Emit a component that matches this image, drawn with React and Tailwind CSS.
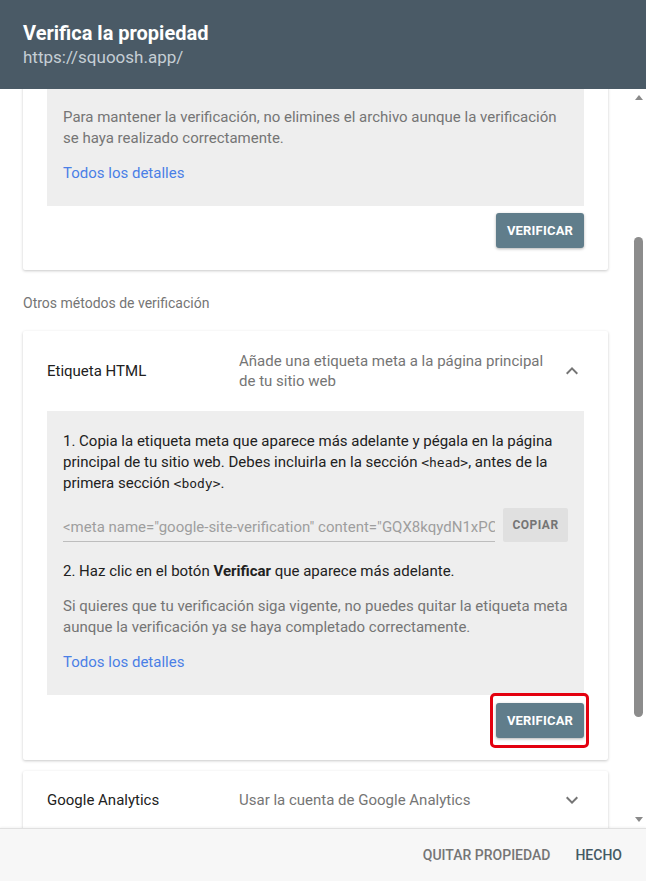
import React from "react";

const ChevronUp = () => (
  <svg width="24" height="24" viewBox="0 0 24 24" fill="#757575">
    <path d="M7.41 15.41L12 10.83l4.59 4.58L18 14l-6-6-6 6z" />
  </svg>
);
const ChevronDown = () => (
  <svg width="24" height="24" viewBox="0 0 24 24" fill="#757575">
    <path d="M7.41 8.59L12 13.17l4.59-4.58L18 10l-6 6-6-6 1.41-1.41z" />
  </svg>
);

const VerifyButton = () => (
  <button className="h-[35px] w-[88px] rounded-[3px] bg-[#607d8b] text-white text-[13px] font-bold tracking-[0.2px] shadow-[0_1px_3px_rgba(0,0,0,0.3)]">
    VERIFICAR
  </button>
);

const mono = { fontFamily: "'DejaVu Sans Mono', monospace" };

export default function App() {
  return (
    <div
      className="w-full h-[881px] flex flex-col overflow-hidden bg-white"
      style={{ fontFamily: "Roboto, 'Liberation Sans', sans-serif" }}
    >
      {/* Header */}
      <div className="h-[89px] shrink-0 bg-[#4a5a66] px-[23px] pt-[20px]">
        <div className="text-[20px] leading-[26px] font-bold text-white">Verifica la propiedad</div>
        <div className="text-[17px] leading-[22px] text-[#c5ced5]">https://squoosh.app/</div>
      </div>

      {/* Scroll area */}
      <div className="flex-1 flex flex-row overflow-hidden">
        <div className="flex-1 overflow-hidden">
          <div className="mt-[-2px] px-[23px]">
            {/* Card 1 */}
            <div className="bg-white rounded-b-[2px] shadow-[0_1px_3px_rgba(0,0,0,0.22)] px-[24px] pb-[22px]">
              <div className="bg-[#eeeeee] px-[16px] pt-[20px] pb-[22px]">
                <p className="text-[15px] leading-[21px] text-[#757575]">
                  Para mantener la verificación, no elimines el archivo aunque la verificación se haya realizado correctamente.
                </p>
                <div className="mt-[14px] text-[15px] leading-[21px] text-[#4a7fe6]">Todos los detalles</div>
              </div>
              <div className="mt-[7px] flex justify-end">
                <VerifyButton />
              </div>
            </div>

            <div className="mt-[23px] mb-[18px] text-[14px] leading-[20px] text-[#757575]">
              Otros métodos de verificación
            </div>

            {/* Card 2 */}
            <div className="bg-white rounded-[2px] shadow-[0_1px_3px_rgba(0,0,0,0.22)] px-[24px] pb-[22px]">
              <div className="flex items-center py-[20px]">
                <div className="w-[192px] text-[15px] leading-[21px] text-[#212121]">Etiqueta HTML</div>
                <div className="flex-1 pr-[10px] text-[15px] leading-[20px] text-[#757575]">
                  Añade una etiqueta meta a la página principal de tu sitio web
                </div>
                <ChevronUp />
              </div>
              <div className="bg-[#eeeeee] px-[16px] pt-[20px] pb-[22px]">
                <p className="text-[15px] leading-[21px] text-[#212121]">
                  1. Copia la etiqueta meta que aparece más adelante y pégala en la página principal de tu sitio web. Debes incluirla en la sección{" "}
                  <span className="text-[13px] leading-[21px]" style={mono}>&lt;head&gt;</span>, antes de la primera sección{" "}
                  <span className="text-[13px] leading-[21px]" style={mono}>&lt;body&gt;</span>.
                </p>
                <div className="mt-[14px] flex items-end gap-[8px]">
                  <div className="flex-1 min-w-0 h-[28px] border-b border-[#bdbdbd] overflow-hidden whitespace-nowrap text-[15px] leading-[27px] text-[#9e9e9e]">
                    &lt;meta name="google-site-verification" content="GQX8kqydN1xPC" /&gt;
                  </div>
                  <button className="w-[65px] h-[34px] shrink-0 rounded-[2px] bg-[#e0e0e0] text-[12px] font-bold text-[#757575] tracking-[0.5px]">
                    COPIAR
                  </button>
                </div>
                <p className="mt-[19px] text-[15px] leading-[21px] text-[#212121]">
                  2. Haz clic en el botón <b>Verificar</b> que aparece más adelante.
                </p>
                <p className="mt-[14px] text-[15px] leading-[21px] text-[#757575]">
                  Si quieres que tu verificación siga vigente, no puedes quitar la etiqueta meta aunque la verificación ya se haya completado correctamente.
                </p>
                <div className="mt-[14px] text-[15px] leading-[21px] text-[#4a7fe6]">Todos los detalles</div>
              </div>
              <div className="mt-[8px] flex justify-end">
                <div className="relative">
                  <VerifyButton />
                  <div className="absolute -left-[6px] -right-[5px] -top-[10px] -bottom-[10px] border-[3px] border-[#e3000f] rounded-[5px] pointer-events-none" />
                </div>
              </div>
            </div>

            {/* Card 3 */}
            <div className="mt-[11px] bg-white rounded-[2px] shadow-[0_1px_3px_rgba(0,0,0,0.22)] px-[24px]">
              <div className="flex items-center pt-[17px] pb-[20px]">
                <div className="w-[192px] text-[15px] leading-[21px] text-[#212121]">Google Analytics</div>
                <div className="flex-1 text-[15px] leading-[21px] text-[#757575]">Usar la cuenta de Google Analytics</div>
                <ChevronDown />
              </div>
            </div>
          </div>
        </div>

        {/* Scrollbar */}
        <div className="w-[15px] shrink-0 flex flex-col items-center bg-white">
          <div className="h-[17px] flex items-center justify-center">
            <div className="w-0 h-0 border-l-[4px] border-r-[4px] border-b-[5px] border-l-transparent border-r-transparent border-b-[#8a8a8a]" />
          </div>
          <div className="mt-[131px] w-[9px] h-[480px] rounded-[5px] bg-[#8c8c8c]" />
          <div className="flex-1" />
          <div className="h-[17px] flex items-center justify-center">
            <div className="w-0 h-0 border-l-[4px] border-r-[4px] border-t-[5px] border-l-transparent border-r-transparent border-t-[#8a8a8a]" />
          </div>
        </div>
      </div>

      {/* Footer */}
      <div className="h-[53px] shrink-0 border-t border-[#e0e0e0] bg-[#f7f7f7] flex items-center justify-end gap-[25px] pr-[24px] shadow-[0_-1px_2px_rgba(0,0,0,0.05)]">
        <span className="text-[14px] font-medium text-[#757575]">QUITAR PROPIEDAD</span>
        <span className="text-[14px] font-medium text-[#455a64]">HECHO</span>
      </div>
    </div>
  );
}
